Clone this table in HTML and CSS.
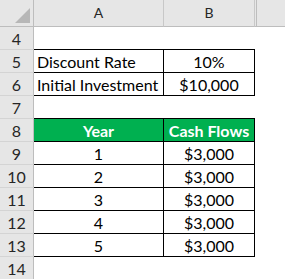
FILE: index.html
```html
<!DOCTYPE html>
<html>
<head>
<meta charset="utf-8">
<link rel="stylesheet" href="styles.css">
</head>
<body>
<div class="sheet">
  <div class="hd corner"><svg class="tri" width="15" height="15" viewBox="0 0 15 15"><polygon points="15,0 15,15 0,15" fill="#b7b7b7"/></svg></div>
  <div class="hd col">A</div>
  <div class="hd col">B</div>
  <div class="hd col last"></div>

  <div class="rh">4</div><div class="c tb"></div><div class="c tb"></div><div class="c"></div>
  <div class="rh">5</div><div class="c tb tr left">Discount Rate</div><div class="c tb tr">10%</div><div class="c"></div>
  <div class="rh">6</div><div class="c tb tr left">Initial Investment</div><div class="c tb tr">$10,000</div><div class="c"></div>
  <div class="rh">7</div><div class="c tb"></div><div class="c tb"></div><div class="c"></div>
  <div class="rh">8</div><div class="c tb tr green">Year</div><div class="c tb tr green">Cash Flows</div><div class="c"></div>
  <div class="rh">9</div><div class="c tb tr">1</div><div class="c tb tr">$3,000</div><div class="c"></div>
  <div class="rh">10</div><div class="c tb tr">2</div><div class="c tb tr">$3,000</div><div class="c"></div>
  <div class="rh">11</div><div class="c tb tr">3</div><div class="c tb tr">$3,000</div><div class="c"></div>
  <div class="rh">12</div><div class="c tb tr">4</div><div class="c tb tr">$3,000</div><div class="c"></div>
  <div class="rh">13</div><div class="c tb tr">5</div><div class="c tb tr">$3,000</div><div class="c"></div>
  <div class="rh">14</div><div class="c"></div><div class="c"></div><div class="c"></div>
</div>
</body>
</html>
```
FILE: styles.css
```css
html, body {
  margin: 0;
  padding: 0;
  background: #ffffff;
}
body {
  font-family: Lato, "Liberation Sans", sans-serif;
  font-size: 16px;
  color: #000000;
  overflow: hidden;
}
.sheet {
  display: grid;
  grid-template-columns: 34px 130px 91px 1fr;
  grid-template-rows: 27px repeat(11, 23px);
  width: 285px;
}
.sheet > div {
  box-sizing: border-box;
  display: flex;
  align-items: flex-end;
  justify-content: center;
  line-height: 16px;
  padding-bottom: 2px;
  white-space: nowrap;
  overflow: hidden;
}
.hd {
  background: #e6e6e6;
  border-bottom: 1px solid #bdbdbd;
  color: #262626;
  font-size: 14px;
  padding-bottom: 5px !important;
}
.corner {
  border-right: 1px solid #bdbdbd;
  justify-content: flex-end !important;
  padding: 0 3px 3px 0 !important;
}
.tri { display: block; }
.col {
  border-right: 1px solid #c8c8c8;
}
.col.last {
  border-right: none;
  box-shadow: inset 1px 0 0 #e6e6e6, inset 2px 0 0 #bdbdbd;
}
.rh {
  background: #e6e6e6;
  border-right: 1px solid #bdbdbd;
  border-bottom: 1px solid #d4d4d4;
  color: #262626;
}
.c.tb { border-bottom: 1px solid #000000; }
.c.tr { border-right: 1px solid #000000; }
.c.left {
  justify-content: flex-start;
  padding-left: 3px;
}
.c.green {
  background: #00b050;
  color: #ffffff;
  font-weight: bold;
}
```
